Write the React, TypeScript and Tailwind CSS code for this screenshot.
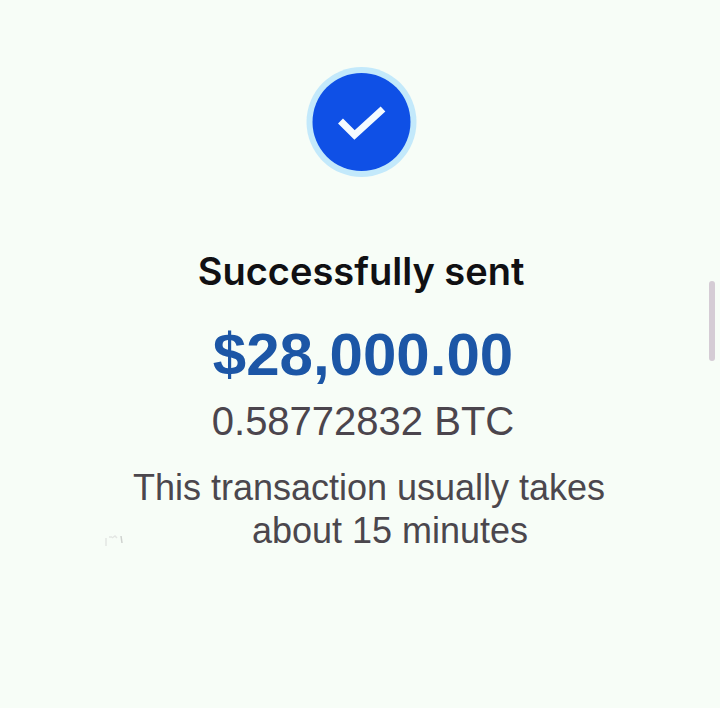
export default function App() {
  return (
    <main className="relative flex min-h-screen flex-col items-center bg-[#f7fdf7] pt-[67px] pr-4 pb-16 pl-[18px] text-center font-['Liberation_Sans',Arial,sans-serif]">
      <SuccessBadge />

      <h1 className="mt-[68px] font-['Inter',sans-serif] text-[38px] leading-[48px] font-semibold text-[#101013]">
        Successfully sent
      </h1>

      <section className="mt-[26px] pl-1">
        <p className="text-[60px] leading-[68px] font-bold text-[#1c56a6]">$28,000.00</p>
        <p className="mt-2 text-[40px] leading-[48px] text-[#4b454d]">0.58772832 BTC</p>
      </section>

      <p className="relative mt-[21px] pl-4 text-[36px] leading-[43px] text-[#4b474d]">
        <span className="block">This transaction usually takes</span>
        <span className="block pl-[42px]">about 15 minutes</span>
        <SmudgeMark />
      </p>

      {/* scroll thumb */}
      <div className="absolute top-[281px] right-[5px] h-20 w-1.5 rounded-full bg-[#d5ccd5]" />
    </main>
  );
}

function SuccessBadge() {
  return (
    <svg viewBox="0 0 112 112" className="size-28" role="img" aria-label="Success">
      <circle cx="56.500" cy="55" r="55" fill="#c3e9fb" />
      <circle cx="56.500" cy="55" r="49" fill="#0f50e6" />
      <path d="M35.500 54L49.500 68L78 42" fill="none" stroke="#f4fbff" strokeWidth="7" />
    </svg>
  );
}

function SmudgeMark() {
  return (
    <svg viewBox="0 0 20 14" className="absolute bottom-1 -left-3 h-3.5 w-5" fill="none" aria-hidden="true">
      <path d="M1 12V4M4 3h3M7 4l3-2 2 2" stroke="#e3e6e3" strokeWidth="1.500" />
      <path d="M16 2l1 7" stroke="#cfd2cf" strokeWidth="1.500" />
    </svg>
  );
}
